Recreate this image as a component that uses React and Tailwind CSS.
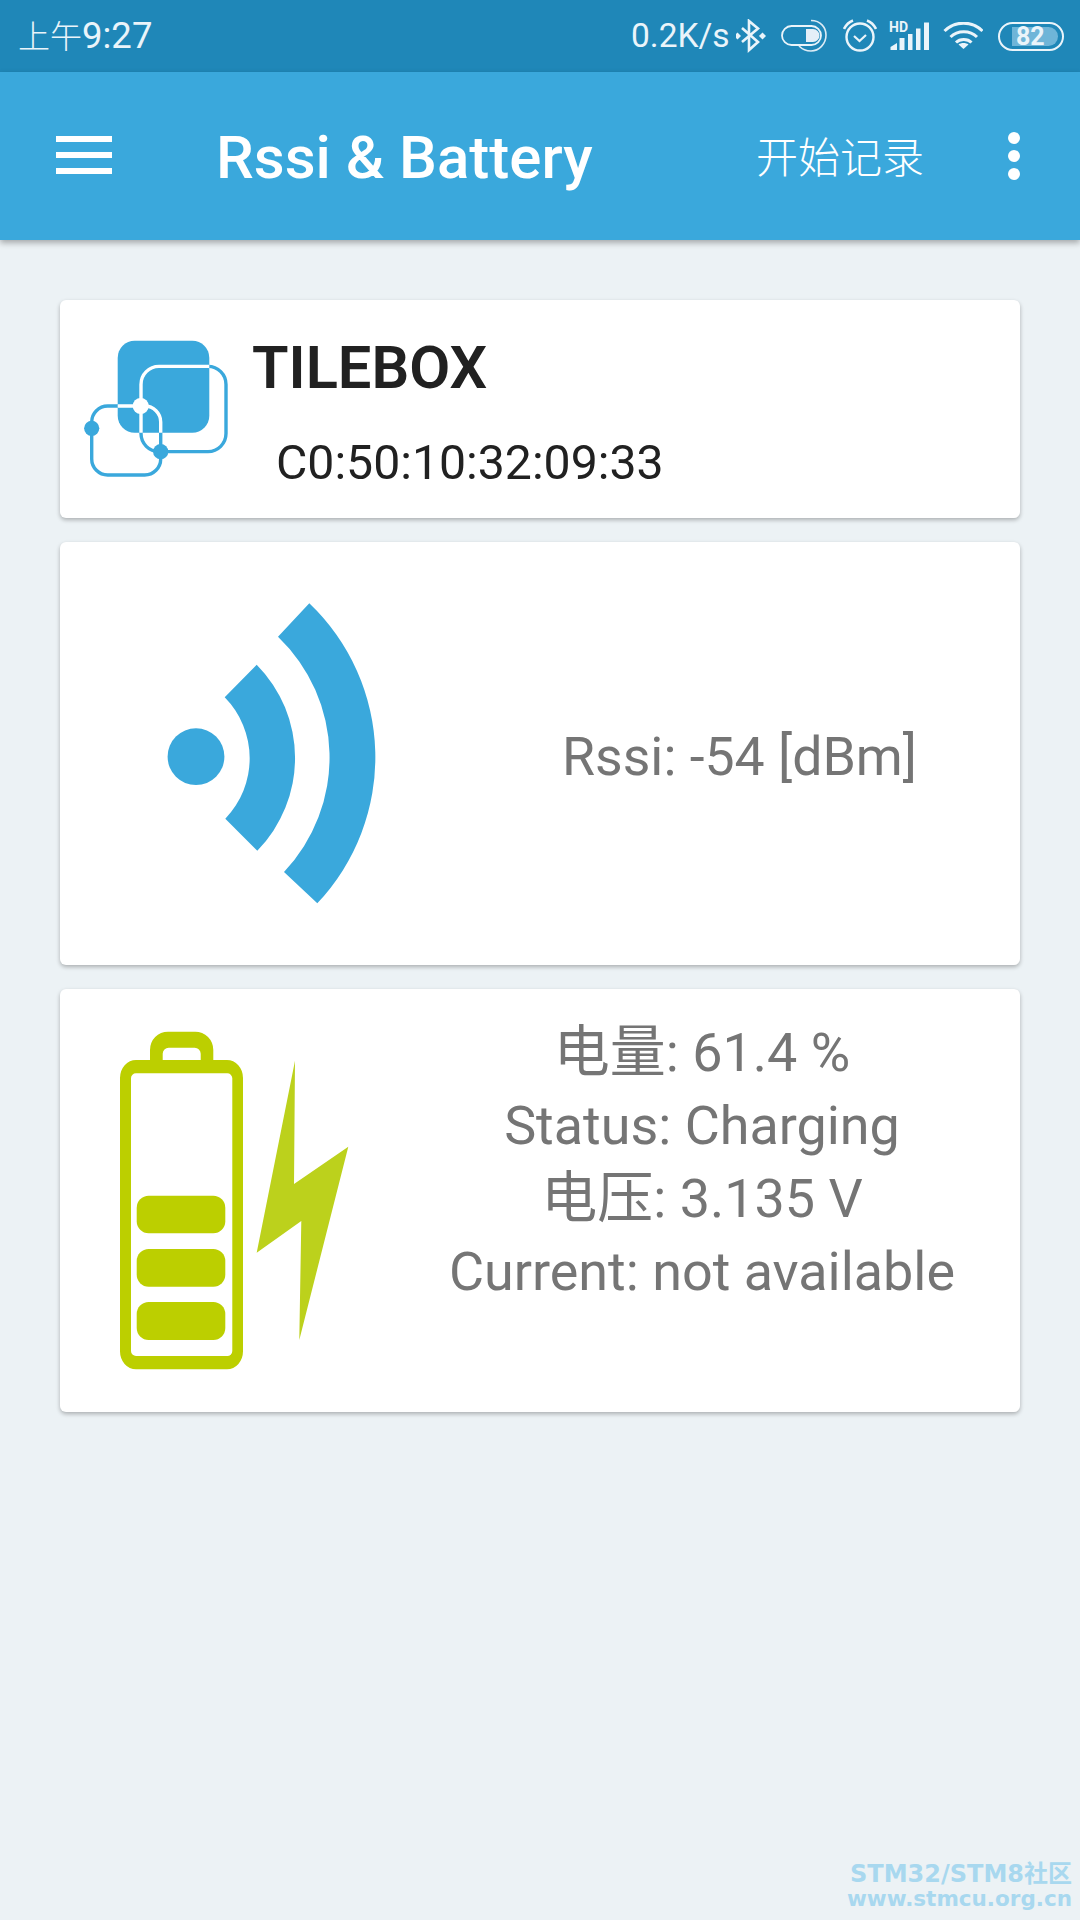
import React from "react";

const BLUE = "#3aa8dc";

function Bluetooth() {
  return (
    <svg width="30" height="34" viewBox="736 20 30 34" className="shrink-0">
      <path d="M742 29 L758 43 L749 51 L749 22 L758 29.5 L742 43" fill="none" stroke="#eaf4fa" strokeWidth="2.6" />
      <rect x="735" y="34.5" width="5" height="5" transform="rotate(45 737.5 37)" fill="#eaf4fa" />
      <rect x="760" y="34.5" width="5" height="5" transform="rotate(45 762.5 37)" fill="#eaf4fa" />
    </svg>
  );
}

function Toggle() {
  return (
    <svg width="47" height="34" viewBox="780 20 47 34" className="shrink-0">
      <rect x="782" y="27" width="39" height="19" rx="9.5" fill="none" stroke="#eaf4fa" strokeWidth="1.8" />
      <path d="M806 30 h7 a6.5 6.5 0 0 1 0 13 h-7 z" fill="#e4eff8" />
      <path d="M811 21.5 C821 21.5 826 29 826 36 C826 45 819 52 811 52 C806 52 802 50 799 47" fill="none" stroke="#dcebf5" strokeWidth="1.6" />
    </svg>
  );
}

function Alarm() {
  return (
    <svg width="34" height="34" viewBox="843 20 34 34" className="shrink-0">
      <circle cx="860" cy="38" r="13.5" fill="none" stroke="#eaf4fa" strokeWidth="2.4" />
      <path d="M854 37 L859.5 42 L866 36" fill="none" stroke="#eaf4fa" strokeWidth="2.2" />
      <path d="M844 30 C846 26 849 23 853 21.5 M876 30 C874 26 871 23 867 21.5" fill="none" stroke="#eaf4fa" strokeWidth="2.6" />
    </svg>
  );
}

function Signal() {
  return (
    <div className="relative w-[41px] h-[30px] shrink-0">
      <svg width="41" height="30" viewBox="889 20 41 30" className="block">
        <path d="M890.5 49 v-3 l6.5 -4 v7 z" fill="#eaf4fa" />
        <rect x="899.5" y="37" width="5" height="12" fill="#eaf4fa" />
        <rect x="908" y="33" width="4.5" height="16" fill="#eaf4fa" />
        <rect x="916" y="27.5" width="4.5" height="21.5" fill="#eaf4fa" />
        <rect x="924" y="21.5" width="5" height="27.5" fill="#eaf4fa" />
      </svg>
      <span className="absolute left-0 top-[-1px] text-[14px] leading-[14px] font-bold text-[#eaf4fa] font-['Roboto',sans-serif]">HD</span>
    </div>
  );
}

function Wifi() {
  return (
    <svg width="40" height="28" viewBox="943 23 40 28" className="shrink-0">
      <path d="M944.5 32 C955 21.5 972 21.5 982.5 32 M950.5 38 C957.5 31 970 31 977 38 M956 43.5 C960 39.5 967.5 39.5 971.5 43.5" fill="none" stroke="#eaf4fa" strokeWidth="3" />
      <path d="M963.5 50 L958.5 45.5 C961 43.5 966 43.5 968.5 45.5 Z" fill="#eaf4fa" />
    </svg>
  );
}

function Battery() {
  return (
    <div className="relative w-[66px] h-[29px] shrink-0 rounded-full border-[2.6px] border-[#eaf4fa] overflow-hidden flex items-center">
      <div className="absolute left-[12px] top-[3px] bottom-[3px] w-[46px] rounded-r-full bg-[#6fb5d8]" />
      <span className="relative ml-[16px] text-[25px] leading-[25px] font-bold text-[#eaf4fa] font-['Roboto',sans-serif]">82</span>
    </div>
  );
}

function TileLogo() {
  return (
    <svg width="146" height="140" viewBox="82 338 146 140" className="shrink-0">
      <defs>
        <clipPath id="fillClip">
          <rect x="117.7" y="340.7" width="91.6" height="92" rx="17" />
        </clipPath>
      </defs>
      <rect x="117.7" y="340.7" width="91.6" height="92" rx="17" fill={BLUE} />
      <rect x="141" y="366.4" width="85" height="85.2" rx="18" fill="none" stroke={BLUE} strokeWidth="3.4" />
      <rect x="91.7" y="406" width="69" height="69" rx="16" fill="none" stroke={BLUE} strokeWidth="3.4" />
      <g clipPath="url(#fillClip)">
        <rect x="141" y="366.4" width="85" height="85.2" rx="18" fill="none" stroke="#ffffff" strokeWidth="3.4" />
        <rect x="91.7" y="406" width="69" height="69" rx="16" fill="none" stroke="#ffffff" strokeWidth="3.4" />
      </g>
      <circle cx="140.7" cy="406" r="8" fill="#ffffff" />
      <circle cx="91.7" cy="428.3" r="7.6" fill={BLUE} />
      <circle cx="160.7" cy="451.7" r="7.6" fill={BLUE} />
    </svg>
  );
}

function SignalIcon() {
  return (
    <svg width="240" height="304" viewBox="166 602 240 304" className="shrink-0">
      <circle cx="196" cy="756.7" r="28.4" fill={BLUE} />
      <path d="M256.7 664.7 A132.7 132.7 0 0 1 257.3 850.7 L225.3 818.7 A87 87 0 0 0 224.7 697.3 Z" fill={BLUE} />
      <path d="M309.3 603.3 A212.6 212.6 0 0 1 317.3 903.3 L284 872 A167 167 0 0 0 278 636.7 Z" fill={BLUE} />
    </svg>
  );
}

function BatteryIcon() {
  return (
    <svg width="240" height="340" viewBox="118 1030 240 340" className="shrink-0">
      <path fillRule="evenodd" d="M168 1031.7 H195 A18 18 0 0 1 213.3 1050 V1060 H150 V1050 A18 18 0 0 1 168 1031.7 Z M168.7 1047.7 A6 6 0 0 0 162.7 1053.7 V1060 H200.7 V1053.7 A6 6 0 0 0 194.7 1047.7 Z" fill="#bccf00" />
      <path fillRule="evenodd" d="M136 1060 H227 A16 18 0 0 1 243 1078 V1351 A16 18 0 0 1 227 1369.3 H136 A16 18 0 0 1 120 1351 V1078 A16 18 0 0 1 136 1060 Z M136 1073.3 A5 5 0 0 0 131 1078.3 V1351 A5 5 0 0 0 136 1356 H227 A5 5 0 0 0 232.3 1351 V1078.3 A5 5 0 0 0 227 1073.3 Z" fill="#bccf00" />
      <rect x="136.7" y="1195.7" width="88.6" height="37.6" rx="12" fill="#bccf00" />
      <rect x="136.7" y="1249" width="88.6" height="37.7" rx="12" fill="#bccf00" />
      <rect x="136.7" y="1302" width="88.6" height="38" rx="12" fill="#bccf00" />
      <path d="M295 1060.7 L294 1184 L348.3 1146.7 L299.3 1340 L301.3 1221 L256.7 1252.7 Z" fill="#bcd11c" />
    </svg>
  );
}

export default function App() {
  return (
    <div className="relative w-[1080px] h-[1920px] overflow-hidden bg-[#ecf2f5] font-['Roboto','Noto_Sans_CJK_SC',sans-serif]">
      <div className="flex items-center h-[72px] bg-[#1f87b8] pl-[18px] text-[36.5px] leading-none text-[#eaf4fa]">
        <span className="w-[613px]">
          <span className="text-[32px] font-light font-['Noto_Sans_CJK_SC',sans-serif]">上午</span>9:27
        </span>
        <span className="w-[105px] text-[33.5px]">0.2K/s</span>
        <Bluetooth />
        <div className="ml-[14px] shrink-0"><Toggle /></div>
        <div className="ml-[16px] shrink-0"><Alarm /></div>
        <div className="ml-[12px] shrink-0"><Signal /></div>
        <div className="ml-[13px] shrink-0"><Wifi /></div>
        <div className="ml-[15px] shrink-0"><Battery /></div>
      </div>

      <div className="flex items-center h-[168px] bg-[#3aa8dc] shadow-[0_3px_6px_rgba(0,0,0,0.3)] text-white">
        <div className="flex flex-col gap-[10px] ml-[56px] mt-[-2px] w-[56px]">
          <div className="h-[6px] bg-white" />
          <div className="h-[6px] bg-white" />
          <div className="h-[6px] bg-white" />
        </div>
        <span className="ml-[104px] mt-[4px] w-[540px] text-[60px] leading-none font-medium">Rssi &amp; Battery</span>
        <span className="text-[42px] mt-[-2px] leading-none font-light font-['Noto_Sans_CJK_SC',sans-serif]">开始记录</span>
        <div className="flex flex-col gap-[6px] ml-[84px]">
          <div className="w-[12px] h-[12px] rounded-full bg-white" />
          <div className="w-[12px] h-[12px] rounded-full bg-white" />
          <div className="w-[12px] h-[12px] rounded-full bg-white" />
        </div>
      </div>

      <div className="flex flex-col gap-[24px] mx-[60px] mt-[60px]">
        <div className="flex h-[218px] bg-white rounded-[6px] shadow-[0_2px_4px_rgba(0,0,0,0.28)] pl-[22px] pt-[38px]">
          <TileLogo />
          <div className="flex flex-col ml-[24px]">
            <span className="text-[59.5px] leading-[60px] font-semibold text-[#212121]">TILEBOX</span>
            <span className="text-[48.2px] leading-[48px] mt-[41px] ml-[24px] text-[#212121]">C0:50:10:32:09:33</span>
          </div>
        </div>

        <div className="flex items-center h-[423px] bg-white rounded-[6px] shadow-[0_2px_4px_rgba(0,0,0,0.28)] pl-[106px]">
          <SignalIcon />
          <span className="ml-[156px] mt-[7px] text-[53.6px] leading-none text-[#757575]">Rssi: -54 [dBm]</span>
        </div>

        <div className="flex h-[423px] bg-white rounded-[6px] shadow-[0_2px_4px_rgba(0,0,0,0.28)] pl-[58px] pt-[41px]">
          <BatteryIcon />
          <div className="flex flex-col items-center ml-[101px] w-[486px] shrink-0 mt-[-14px] text-[53.9px] leading-[73px] text-[#757575] whitespace-nowrap">
            <span><span className="text-[56px]">电量</span>: 61.4 %</span>
            <span>Status: Charging</span>
            <span><span className="text-[56px]">电压</span>: 3.135 V</span>
            <span>Current: not available</span>
          </div>
        </div>
      </div>

      <div className="absolute right-[8px] bottom-[10px] flex flex-col items-end font-['DejaVu_Sans','Noto_Sans_CJK_SC',sans-serif] font-bold text-[#a8d8ef]">
        <span className="text-[24px] leading-[27px]">STM32/STM8社区</span>
        <span className="text-[21.5px] leading-[22px]">www.stmcu.org.cn</span>
      </div>
    </div>
  );
}
